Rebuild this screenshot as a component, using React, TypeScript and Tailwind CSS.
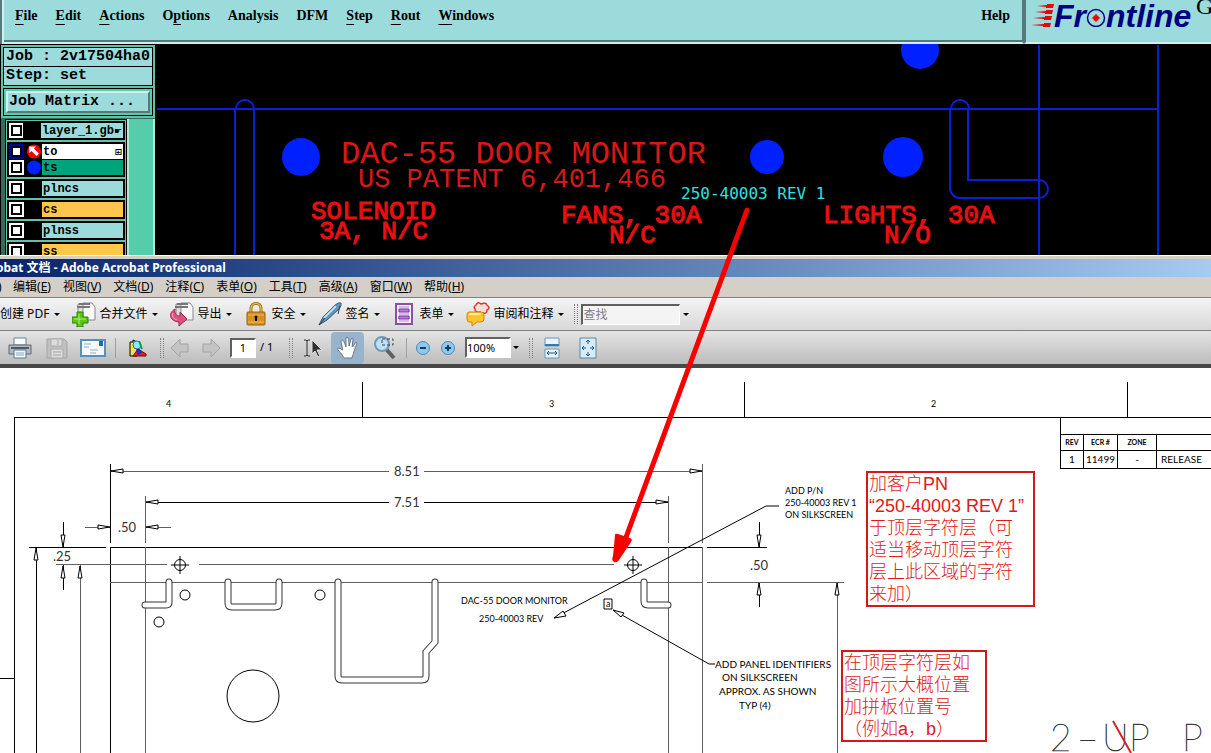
import type { ReactNode } from 'react';

const menus = [
  ['', 'F', 'ile'],
  ['', 'E', 'dit'],
  ['', 'A', 'ctions'],
  ['O', 'p', 'tions'],
  ['Analysis', '', ''],
  ['DFM', '', ''],
  ['', 'S', 'tep'],
  ['', 'R', 'out'],
  ['', 'W', 'indows'],
];

type Layer = { name: string; color: string; mark?: 'arrow' | 'dot'; suffix?: string };

const layerGroups: Layer[][] = [
  [{ name: 'layer_1.gb', color: 'bg-[#9cdbdb]', suffix: '☛' }],
  [
    { name: 'to', color: 'bg-white', mark: 'arrow', suffix: '⊞' },
    { name: 'ts', color: 'bg-[#00a47c]', mark: 'dot' },
  ],
  [{ name: 'plncs', color: 'bg-[#9cdbdb]' }],
  [{ name: 'cs', color: 'bg-[#ffc64c]' }],
  [{ name: 'plnss', color: 'bg-[#9cdbdb]' }],
  [{ name: 'ss', color: 'bg-[#ffc64c]' }],
];

const acrobatMenus = [
  ['编辑', 'E'],
  ['视图', 'V'],
  ['文档', 'D'],
  ['注释', 'C'],
  ['表单', 'O'],
  ['工具', 'T'],
  ['高级', 'A'],
  ['窗口', 'W'],
  ['帮助', 'H'],
];

function Logo() {
  return (
    <div className="flex h-8 items-center pl-[5px] font-['Liberation_Sans',sans-serif] text-[32px] leading-8 font-bold text-[#000080] italic">
      <svg width="23" height="26" viewBox="0 0 23 26" fill="#f00000">
        <path d="M6 3l10-1V1h7l-1 4h-7V4zM4 9l11-1V7h7l-1 4h-7v-1zM2 15l12-1v-1h7l-1 4h-7v-1zM0 22l13-1v-1h7l-1 4h-7v-1z" />
      </svg>
      <span>Fr</span>
      <svg width="20" height="22" viewBox="0 0 20 22">
        <circle cx="10" cy="13" r="8.500" fill="none" stroke="#000080" strokeWidth="1.500" />
        <path d="M10 9l4 4-4 4-4-4z" fill="#f00000" />
      </svg>
      <span>ntline</span>
    </div>
  );
}

function MenuBar() {
  return (
    <header className="flex h-11 shrink-0 bg-[#9cdbdb] font-['Liberation_Serif',serif] text-[14px] font-bold text-black">
      <div className="w-[2px] bg-[#567a7c]" />
      <nav className="flex flex-1 items-start gap-[18px] border-2 border-t-0 border-[#d0f0ee] border-r-[#567a7c] pt-[5px] pl-[11px] shadow-[inset_0_-2px_0_#567a7c]">
        {menus.map(([before, key, after]) => (
          <button key={before + key + after}>
            {before}
            <span className="underline underline-offset-4">{key}</span>
            {after}
          </button>
        ))}
        <button className="mr-3 ml-auto">Help</button>
      </nav>
      <div className="relative w-[187px] overflow-hidden border-b-2 border-l-2 border-b-[#d0f0ee] border-l-[#567a7c]">
        <Logo />
        <span className="absolute -top-2 left-[170px] text-[24px] leading-7 font-normal">G</span>
      </div>
    </header>
  );
}

function LayerRow({ layer }: { layer: Layer }) {
  const active = layer.mark === 'arrow';
  return (
    <li className="flex h-[15px] items-stretch">
      <label className={`flex w-[15px] items-center justify-center ${active ? 'bg-[#0000a0]' : 'bg-white'}`}>
        <input
          type="checkbox"
          aria-label={layer.name}
          className="size-[11px] appearance-none border-2 border-black bg-white"
        />
      </label>
      <svg width="17" height="15" viewBox="0 0 17 15" className="ml-px">
        {layer.mark && <circle cx="9" cy="7.500" r="7" fill={active ? '#f00000' : '#0020ff'} />}
        {active && <path d="M4 2.500h7L9 4.500l5 5-2.500 2.500-5-5-2 2z" fill="#fff" />}
      </svg>
      <span className={`flex flex-1 items-center justify-between pl-px leading-[14px] ${layer.color}`}>
        {layer.name}
        {layer.suffix && <span className="pr-px font-['DejaVu_Sans',sans-serif] text-[9px]">{layer.suffix}</span>}
      </span>
    </li>
  );
}

function Sidebar() {
  return (
    <aside className="flex w-[155px] shrink-0 flex-col overflow-hidden border-t border-l border-black bg-[#66bfa6] font-['Liberation_Mono',monospace] font-bold text-black">
      <div className="mx-[2px] mt-[2px] border border-black bg-[#9cdbdb] pl-[2px] text-[15px] leading-[18px] whitespace-nowrap">
        Job : 2v17504ha0
      </div>
      <div className="mx-[2px] -mt-px border border-black bg-[#9cdbdb] pl-[2px] text-[15px] leading-[18px]">
        Step: set
      </div>
      <div className="mx-[2px] mt-[2px] border border-black bg-[#55ccaa] p-[2px]">
        <button className="block h-[22px] w-full border-2 border-[#d0f0ee] border-r-[#567a7c] border-b-[#567a7c] bg-[#9cdbdb] pl-px text-left text-[15px] leading-[16px]">
          Job Matrix ...
        </button>
      </div>
      <div className="mt-[2px] flex min-h-0 flex-1 border-t border-[#336b5c]">
        <div className="w-1 bg-[#336b5c]" />
        <ul className="w-[122px] overflow-hidden border border-b-0 border-black p-px text-[12px]">
          {layerGroups.map((group) => (
            <li key={group[0].name} className="mb-[2px]">
              <ul className="flex flex-col gap-px bg-black p-[2px]">
                {group.map((layer) => (
                  <LayerRow key={layer.name} layer={layer} />
                ))}
              </ul>
            </li>
          ))}
        </ul>
        <div className="flex-1 border-x-2 border-[#a8ecd6] bg-[#55ccaa]" />
      </div>
    </aside>
  );
}

function BoardView() {
  return (
    <svg className="h-full min-w-0 flex-1 bg-black">
      {/* board coordinates start at the window origin */}
      <g transform="translate(-155 -44)">
        <g fill="none" stroke="#0a20d8" strokeWidth="2">
          <path d="M157 109H1158M1039 45V256M1158 45V256" shapeRendering="crispEdges" />
          <path d="M235 256V109M254 256V109M236 109a9 9 0 0 1 18 0" />
          <path d="M950 109V188a10 10 0 0 0 10 10H1039M968 109V180H1039M951 109a9 9 0 0 1 18 0M1039 180a9 9 0 0 1 0 18" />
        </g>
        <g fill="#0020ff">
          <circle cx="301" cy="157" r="19" />
          <circle cx="767" cy="157" r="17" />
          <circle cx="903" cy="157" r="20" />
          <circle cx="920" cy="50" r="19" />
        </g>
        <g className="fill-[#d81818] font-['Liberation_Mono',monospace]">
          <text x="341" y="163" className="text-[32px]">DAC-55 DOOR MONITOR</text>
          <text x="358" y="187" className="text-[27px]">US PATENT 6,401,466</text>
        </g>
        <g className="fill-[#e81010] stroke-[#e81010] font-['Liberation_Mono',monospace] text-[26px]">
          <text x="311" y="219">SOLENOID</text>
          <text x="319" y="239">3A, N/C</text>
          <text x="561" y="223">FANS, 30A</text>
          <text x="609" y="243">N/C</text>
          <text x="823" y="223">LIGHTS, 30A</text>
          <text x="884" y="243">N/O</text>
        </g>
        <text x="681" y="199" className="fill-[#30e0e0] font-['DejaVu_Sans_Mono',monospace] text-[16px]">
          250-40003 REV 1
        </text>
      </g>
    </svg>
  );
}

function Caret() {
  return (
    <svg width="6" height="3" viewBox="0 0 6 3" className="shrink-0">
      <path d="M0 0h6L3 3z" fill="#000" />
    </svg>
  );
}

function Grip() {
  return <div className="h-5 w-1 shrink-0 border-x border-dotted border-[#808080]" />;
}

function ToolMenu({ label, icon }: { label: string; icon?: ReactNode }) {
  return (
    <button className="flex shrink-0 items-center whitespace-nowrap">
      {icon && (
        <svg width="24" height="26" viewBox="0 0 24 26" className="mr-[3px]">
          {icon}
        </svg>
      )}
      <span className="mr-[5px]">{label}</span>
      <Caret />
    </button>
  );
}

const pages = (
  <>
    <path d="M6 3h10v13H6z" fill="#ddd" stroke="#888" />
    <path d="M11 2h9l3 4v13H11z" fill="#f8f8f8" stroke="#888" />
    <path d="M5 6h13M7 3h11" stroke="#777" strokeWidth="2" />
  </>
);

const combineIcon = (
  <>
    {pages}
    <path d="M5 11h6v5h5v6h-5v4H5v-4H0v-6h5z" fill="#58c814" stroke="#2c7c10" />
    <path d="M7 13v10M2 18h12" stroke="#b0f070" />
  </>
);

const exportIcon = (
  <>
    {pages}
    <path d="M5 8C-2 12-1 20 9 21v4l8-7-7-7v4c-4 0-6-3-5-7z" fill="#e0507c" stroke="#a02850" />
    <path d="M3 12q-2 5 4 7" fill="none" stroke="#f8a8c0" />
  </>
);

const lockIcon = (
  <>
    <path d="M7 12V7c0-6 10-6 10 0v5" fill="none" stroke="#a87820" strokeWidth="3" />
    <path d="M7 12V7c0-6 10-6 10 0v5" fill="none" stroke="#f0c860" />
    <rect x="3" y="11" width="18" height="13" rx="1" fill="#d89020" stroke="#986010" />
    <path d="M4 14h16M4 21h16" stroke="#f0bc58" />
    <circle cx="12" cy="16" r="1.500" />
    <path d="M12 16v4" stroke="#000" strokeWidth="2" />
  </>
);

const penIcon = (
  <>
    <path d="M1 24l4-8L17 4q4-3 6-2 1 2-2 6L9 19z" fill="#5c98c0" stroke="#405868" />
    <path d="M6 17L18 5" stroke="#c0dcf0" strokeWidth="2" />
    <path d="M1 24l6-7M22 5l-2 8" stroke="#303c48" fill="none" />
  </>
);

const formIcon = (
  <>
    <path d="M4 3h16v20H4z" fill="#f8f0fc" stroke="#8850a8" strokeWidth="2" />
    <path d="M7 6h10M7 13h10M7 20h10" stroke="#b090c0" />
    <path d="M7 8h10v3H7zM7 15h10v3H7z" fill="#c078e0" stroke="#7830a0" />
  </>
);

const reviewIcon = (
  <>
    <path
      d="M10 4q2-4 5-1 5-2 6 1 4 3 0 5 0 4-4 3l-2 3-1-4q-5 1-5-3-2-2 1-4z"
      fill="#fcdcd8"
      stroke="#d83828"
      strokeWidth="1.500"
    />
    <path d="M3 11h12q3 0 3 3v4q0 3-3 3h-4l-5 4v-4H3q-2 0-2-3v-4q0-3 2-3z" fill="#ffc428" stroke="#c88810" />
    <path d="M3 13h12" stroke="#fff0a0" strokeWidth="2" />
  </>
);

function IconButton({ label, className, children }: { label: string; className: string; children: ReactNode }) {
  return (
    <button aria-label={label} className={`shrink-0 ${className}`}>
      <svg width="26" height="26" viewBox="0 0 26 26" fill="none">
        {children}
      </svg>
    </button>
  );
}

function TaskBar() {
  return (
    <div className="flex h-[33px] shrink-0 items-center gap-3 overflow-hidden border-b border-[#808080] bg-linear-to-b from-[#f4f4f4] to-[#d8d8d8]">
      <ToolMenu label="创建 PDF" />
      <ToolMenu label="合并文件" icon={combineIcon} />
      <ToolMenu label="导出" icon={exportIcon} />
      <ToolMenu label="安全" icon={lockIcon} />
      <ToolMenu label="签名" icon={penIcon} />
      <ToolMenu label="表单" icon={formIcon} />
      <ToolMenu label="审阅和注释" icon={reviewIcon} />
      <div className="-ml-[2px] flex items-center gap-[3px]">
        <Grip />
        <input
          aria-label="查找"
          placeholder="查找"
          className="h-[21px] w-[99px] border-t-2 border-r border-b border-l-2 border-[#606060] border-r-white border-b-white bg-[#f4f4f4] placeholder:text-[#808080]"
        />
        <button aria-label="查找选项">
          <Caret />
        </button>
      </div>
    </div>
  );
}

function ViewBar() {
  return (
    <div className="flex h-[33px] shrink-0 items-center overflow-hidden bg-linear-to-b from-[#e4e4e4] to-[#bcbcbc]">
      <IconButton label="打印" className="ml-[7px]">
        <path d="M7 3h12v7H7z" fill="#f8fcff" stroke="#6c8494" />
        <path d="M2 10h22v9H2z" fill="#b0b8c0" stroke="#606870" />
        <path d="M4 13h18" stroke="#505860" strokeWidth="2" />
        <path d="M7 15h12v8H7z" fill="#f0f8ff" stroke="#587890" />
        <path d="M9 18h8M9 20h8" stroke="#88a8c0" />
      </IconButton>
      <IconButton label="保存" className="ml-[11px]">
        <path d="M3 4h17l3 3v16H3z" fill="#c0c0c0" stroke="#a4a4a4" />
        <path d="M7 4h11v7H7zM7 14h12v9H7z" fill="#dcdcdc" stroke="#acacac" />
        <path d="M14 5v5M9 17h8M9 20h8" stroke="#a8a8a8" />
      </IconButton>
      <IconButton label="电子邮件" className="ml-[10px]">
        <path d="M1 5h24v16H1z" fill="#f4faff" stroke="#5890bc" strokeWidth="2" />
        <path d="M19 6h4v5h-4z" fill="#2868a8" />
        <path d="M4 9h7M4 12h5M10 15h8M10 18h6" stroke="#98a8b8" />
      </IconButton>
      <div className="ml-[9px] h-5 border-l border-[#a0a0a0]" />
      <IconButton label="组织程序" className="ml-[8px]">
        <path d="M6 7h3V5l4 2v14H6z" fill="#f8e040" stroke="#000" />
        <circle cx="13" cy="10" r="4" fill="#90e8ff" stroke="#2070b0" />
        <path d="M9 21l5-7 8 5v2z" fill="#e02020" stroke="#800000" />
        <path d="M12 16l4-2 2 4-4 2z" fill="#2030d0" />
        <path d="M15 6l3 8" stroke="#18a040" strokeWidth="2" />
      </IconButton>
      <div className="ml-[10px]">
        <Grip />
      </div>
      <IconButton label="上一页" className="ml-[3px]">
        <path d="M4 13l9-9v5h8v8h-8v5z" fill="#c4c4c4" stroke="#a4a4a4" />
      </IconButton>
      <IconButton label="下一页" className="ml-[5px]">
        <path d="M22 13l-9-9v5H5v8h8v5z" fill="#c4c4c4" stroke="#a4a4a4" />
      </IconButton>
      <input
        aria-label="页码"
        defaultValue="1"
        className="ml-[6px] h-5 w-[26px] border-2 border-[#606060] border-r-white border-b-white bg-white text-center text-[11px]"
      />
      <span className="ml-1 w-[13px] text-[11px] whitespace-nowrap">/ 1</span>
      <div className="ml-4">
        <Grip />
      </div>
      <IconButton label="选择工具" className="ml-[10px]">
        <path d="M1 5h2l1 1 1-1h2M4 6v14M1 21h2l1-1 1 1h2" stroke="#303030" />
        <path d="M9 5l10 10h-5l3 6-2 1-3-6-3 3z" fill="#303030" stroke="#e0e0e0" />
      </IconButton>
      <button
        aria-label="手形工具"
        className="ml-[2px] flex h-8 w-[33px] shrink-0 items-center justify-center rounded bg-[#98b4cc]"
      >
        <svg width="24" height="24" viewBox="0 0 24 24">
          <path
            d="M8 22q-2-4-6-8-1-2 1-2 2 0 4 3L5 6q0-2 1-2 2 0 4 7V3q0-2 1-2 2 0 2 9l2-7q2-2 2 0l-1 9 3-5q2-1 2 0l-4 11-1 4z"
            fill="#fff"
            stroke="#687888"
          />
          <path d="M9 11h9l-2 9H9l-3-5z" fill="#fff" />
        </svg>
      </button>
      <IconButton label="放大选框" className="ml-[9px]">
        <path d="M13 14l8 9" stroke="#606060" strokeWidth="4" />
        <circle cx="9" cy="9" r="7" fill="#c0e0f8" stroke="#7098b8" strokeWidth="2" />
        <path d="M9 4h11v6H9z" stroke="#404040" strokeDasharray="3 2" />
      </IconButton>
      <div className="ml-[7px] h-5 border-l border-[#a0a0a0]" />
      <IconButton label="缩小" className="ml-[3px]">
        <circle cx="13" cy="13" r="6.500" fill="#90c8ec" stroke="#5088b0" />
        <path d="M10 13h6" stroke="#103c68" strokeWidth="2" />
      </IconButton>
      <IconButton label="放大" className="-ml-px">
        <circle cx="13" cy="13" r="6.500" fill="#90c8ec" stroke="#5088b0" />
        <path d="M10 13h6M13 10v6" stroke="#103c68" strokeWidth="2" />
      </IconButton>
      <input
        aria-label="缩放比例"
        defaultValue="100%"
        className="ml-1 h-[21px] w-[46px] border-2 border-[#606060] border-r-white border-b-white bg-white text-[11px]"
      />
      <button aria-label="缩放选项" className="ml-[2px]">
        <Caret />
      </button>
      <div className="ml-[10px]">
        <Grip />
      </div>
      <IconButton label="适合宽度" className="ml-[6px]">
        <path d="M6 3h14v8H6zM6 14h14v9H6z" fill="#e8f4fc" stroke="#6898b8" />
        <path d="M6 9h14v2H6z" fill="#3878a8" />
        <path d="M8 18h10M10 16l-2 2 2 2M16 16l2 2-2 2" stroke="#1c5888" />
      </IconButton>
      <IconButton label="适合页面" className="ml-[10px]">
        <path d="M5 3h16v20H5z" fill="#d8ecf8" stroke="#5888a8" />
        <path
          d="M13 5v4M11 7l2-2 2 2M13 17v4M11 19l2 2 2-2M7 13h4M9 11l-2 2 2 2M15 13h4M17 11l2 2-2 2"
          stroke="#1c5888"
        />
      </IconButton>
    </div>
  );
}

function Drawing() {
  const slots =
    'M169 582V602q0 3-3 3H145M228 582V603q0 4 4 4H275q4 0 4-4V582M338 582V676q0 4 4 4H422q4 0 4-4V652L435 642V582M644 582V601q0 4 4 4H668';
  return (
    <svg className="absolute inset-0 h-full w-full">
      <g transform="translate(0 -368)" fill="none" stroke="#000">
        <g shapeRendering="crispEdges">
          <path d="M14 800V417H2000M0 678H14M362 382V417M744 382V417M1127 382V417" />
          <path d="M145 502H389M424 502H668M110 464V543M29 547H106M110 800V547H703M707 547H767M36 547V800M63 522V547M63 590V565M759 522V547M759 607V582" />
          <path
            d="M111 471H389M424 471H702M85 527H110M146 527H171M56 564H167M199 564H614M145 496V543M145 547V800M110 582H703M707 582H844M702 464V543M702 547V800M668 496V543M668 547V800M80 565V800M837 582V800"
            stroke="#606060"
          />
        </g>
        <path d={slots} stroke="#333" strokeWidth="7" strokeLinecap="round" />
        <path d={slots} stroke="#fff" strokeWidth="5" strokeLinecap="round" />
        <g fill="#fff">
          <path d="M111 471l12-2v4zM702 471l-12-2v4zM146 502l12-2v4zM668 502l-12-2v4zM110 527l-12-2v4zM146 527l12-2v4z" />
          <path d="M36 548l-2 12h4zM63 547l-2-12h4zM63 566l-2 12h4zM80 566l-2 12h4zM759 547l-2-12h4zM759 583l-2 12h4zM837 583l-2 12h4z" />
        </g>
        <circle cx="185" cy="595" r="5" />
        <circle cx="320" cy="595" r="5" />
        <circle cx="159" cy="622" r="5" />
        <circle cx="253" cy="696" r="26" />
        <path d="M171 565H189M180 556V574M624 565H642M633 556V574" />
        <circle cx="180" cy="565" r="5.500" />
        <circle cx="633" cy="565" r="5.500" />
        <path d="M779 506H766L554 618M715 664H709L613 610" />
        <path d="M554 618l12-2-3-5zM613 610l8 7 3-4z" fill="#fff" />
        <path d="M604 599h8v10h-8z" />
        <g stroke="none" className="fill-black font-['Lato',sans-serif] text-[9px]">
          <text x="606" y="607">a</text>
          <text x="166" y="407">4</text>
          <text x="549" y="407">3</text>
          <text x="931" y="407">2</text>
        </g>
        <g stroke="none" className="fill-[#333] font-['Lato',sans-serif] text-[13px]">
          <text x="394" y="476">8.51</text>
          <text x="394" y="507">7.51</text>
          <text x="118" y="532">.50</text>
          <text x="53" y="561">.25</text>
          <text x="750" y="570">.50</text>
        </g>
        <g stroke="none" className="fill-black font-['Lato',sans-serif] text-[9px]">
          <text x="461" y="604">DAC-55 DOOR MONITOR</text>
          <text x="479" y="622">250-40003 REV</text>
          <text x="785" y="494">ADD P/N</text>
          <text x="785" y="506">250-40003 REV 1</text>
          <text x="785" y="518">ON SILKSCREEN</text>
        </g>
        <g stroke="none" className="fill-black font-['Lato',sans-serif] text-[10px]">
          <text x="715" y="668">ADD PANEL IDENTIFIERS</text>
          <text x="722" y="681">ON SILKSCREEN</text>
          <text x="719" y="695">APPROX. AS SHOWN</text>
          <text x="739" y="709">TYP (4)</text>
        </g>
        <g stroke="#333" strokeWidth="0.500" className="fill-[#333] font-['Lato',sans-serif] text-[37px] font-thin">
          <text x="1050" y="751">2</text>
          <text x="1077" y="751">–</text>
          <text x="1102" y="751">U</text>
          <text x="1129" y="751">P</text>
          <text x="1182" y="751">P</text>
        </g>
        <path d="M1113 721L1131 753" stroke="#d82020" strokeWidth="2" />
      </g>
    </svg>
  );
}

function RevisionTable() {
  return (
    <table className="absolute top-[49px] left-[1060px] w-[200px] table-fixed border-collapse font-['Lato',sans-serif] text-[10px] text-black">
      <colgroup>
        <col className="w-[23px]" />
        <col className="w-[34px]" />
        <col className="w-[39px]" />
        <col />
      </colgroup>
      <thead>
        <tr className="h-[17px]">
          <td colSpan={4} className="border border-black" />
        </tr>
        <tr className="h-4 text-[7px]">
          <th className="border border-black p-0">REV</th>
          <th className="border border-black p-0">ECR #</th>
          <th className="border border-black p-0">ZONE</th>
          <th className="border border-black p-0" />
        </tr>
      </thead>
      <tbody>
        <tr className="h-[18px] text-center">
          <td className="border border-black p-0">1</td>
          <td className="border border-black p-0">11499</td>
          <td className="border border-black p-0">-</td>
          <td className="border border-black py-0 pr-0 pl-1 text-left">RELEASE</td>
        </tr>
      </tbody>
    </table>
  );
}

function Note({ className, lines }: { className: string; lines: string[] }) {
  return (
    <div
      className={`absolute border-2 border-[#d81818] bg-white pl-px font-['Liberation_Sans','Noto_Sans_CJK_SC',sans-serif] text-[18px] leading-[22px] font-light whitespace-nowrap text-[#e01818] ${className}`}
    >
      {lines.map((line) => (
        <p key={line}>{line}</p>
      ))}
    </div>
  );
}

function Acrobat() {
  return (
    <section className="flex min-h-0 flex-1 flex-col border-t border-white bg-[#d4d0c8] font-['Noto_Sans','Noto_Sans_CJK_SC',sans-serif] text-[12px] text-black">
      <h1 className="mt-[3px] h-[18px] shrink-0 overflow-hidden bg-linear-to-r from-[#0a246a] to-[#a6caf0] text-[12px] leading-[18px] font-bold whitespace-nowrap text-white">
        <span className="-ml-[4px]">obat 文档 - Adobe Acrobat Professional</span>
      </h1>
      <nav className="flex h-[21px] shrink-0 items-center gap-3 border-b border-[#808080]">
        <span className="-mr-[1px] -ml-[2px] w-1 overflow-hidden">)</span>
        {acrobatMenus.map(([name, key]) => (
          <button key={key} className="whitespace-nowrap">
            {name}(<span className="underline">{key}</span>)
          </button>
        ))}
      </nav>
      <TaskBar />
      <ViewBar />
      <div className="h-1 shrink-0 bg-[#484848]" />
      <main className="relative min-h-0 flex-1 overflow-hidden bg-white">
        <Drawing />
        <RevisionTable />
        <Note
          className="top-[103px] left-[866px] w-[169px]"
          lines={['加客户PN', '“250-40003 REV 1”', '于顶层字符层（可', '适当移动顶层字符', '层上此区域的字符', '来加）']}
        />
        <Note
          className="top-[282px] left-[841px] w-[146px]"
          lines={['在顶层字符层如', '图所示大概位置', '加拼板位置号', '（例如a，b）']}
        />
      </main>
    </section>
  );
}

export default function App() {
  return (
    <div className="relative flex h-screen flex-col overflow-hidden">
      <MenuBar />
      <div className="flex h-[211px] shrink-0 bg-black">
        <Sidebar />
        <BoardView />
      </div>
      <Acrobat />
      {/* arrow from the silkscreen text to its place on the drawing */}
      <svg className="pointer-events-none absolute inset-0 h-full w-full" fill="#f80000">
        <path d="M747 210L625 540" stroke="#f80000" strokeWidth="5" strokeLinecap="round" />
        <path d="M615 535q0-2 3-1l12 4q3 1 1 4l-12 18q-2 3-5 2-3-2-1-6z" />
      </svg>
    </div>
  );
}
